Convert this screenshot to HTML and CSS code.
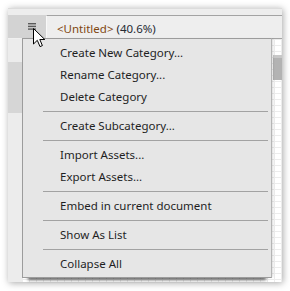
FILE: index.html
```html
<!DOCTYPE html>
<html>
<head>
<meta name="viewport" content="width=device-width, initial-scale=1">
<link rel="stylesheet" href="styles.css">
</head>
<body>

<div class="window">
  <div class="topstrip"></div>

  <div class="header">
    <div class="menuBtn">
      <svg width="8" height="7" viewBox="0 0 8 7">
        <rect x="0" y="0" width="8" height="1.4" fill="#5a5a5a"/>
        <rect x="0" y="2.7" width="8" height="1.4" fill="#5a5a5a"/>
        <rect x="0" y="5.4" width="8" height="1.4" fill="#5a5a5a"/>
      </svg>
    </div>
    <div class="title"><span class="doc">&lt;Untitled&gt;</span> (40.6%)</div>
  </div>

  <div class="panel">
    <div class="scroll"><div class="thumb"></div></div>
    <div class="grid"><div class="tile"></div></div>
  </div>

  <!-- popup menu opened from the header button -->
  <ul class="menu">
    <li>Create New Category...</li>
    <li>Rename Category...</li>
    <li>Delete Category</li>
    <li class="sep"></li>
    <li>Create Subcategory...</li>
    <li class="sep"></li>
    <li>Import Assets...</li>
    <li>Export Assets...</li>
    <li class="sep"></li>
    <li>Embed in current document</li>
    <li class="sep"></li>
    <li>Show As List</li>
    <li class="sep"></li>
    <li>Collapse All</li>
  </ul>

  <svg class="cursor" width="13" height="20" viewBox="0 0 13 20">
    <path d="M0.5 0.5 V16 L4.3 12.3 L7 18.6 L9.4 17.6 L6.8 11.5 H11.8 Z" fill="#fff" stroke="#000" stroke-width="1" stroke-linejoin="miter"/>
  </svg>
</div>

</body>
</html>
```

FILE: styles.css
```css
body {
  margin: 0;
  background: #fff;
  width: 290px;
  height: 291px;
}

* {
  box-sizing: border-box;
  font-family: "Noto Sans", "Liberation Sans", sans-serif;
}

/* The captured window */
.window {
  position: relative;
  margin: 8px 0 0 8px;
  width: 274px;
  height: 274px;
  display: flex;
  flex-direction: column;
  background: #f0f0f0;
  box-shadow: 1px 1px 7px rgba(0, 0, 0, 0.35);
}

.topstrip {
  height: 7px;
  background: #ededed;
  border-top: 1px solid #dcdcdc;
}

/* Header row: menu button + document title */
.header {
  display: flex;
  height: 24px;
}

.menuBtn {
  width: 38px;
  height: 23px;
  background: #d3d3d3;
  padding: 8px 0 0 20px;
  line-height: 0;
}

.title {
  flex: 1;
  background: #eeeeee;
  border-top: 1px solid #a3a3a3;
  border-bottom: 1px solid #a3a3a3;
  border-left: 1px solid #f8f8f8;
  padding: 4px 0 0 10px;
  font-size: 11.5px;
  line-height: 18px;
  color: #262a33;
}

.title .doc {
  color: #80460f;
}

/* Panel under the header */
.panel {
  flex: 1;
  display: flex;
}

.scroll {
  width: 14px;
  background: #ececec;
}

.thumb {
  margin-top: 23px;
  height: 51px;
  background: #d6d6d6;
}

.grid {
  flex: 1;
  display: flex;
  justify-content: flex-end;
  background-color: #fff;
  background-image:
    linear-gradient(#ececec 1px, transparent 1px),
    linear-gradient(90deg, #ececec 1px, transparent 1px);
  background-size: 100% 6px, 7px 100%;
}

.tile {
  margin-top: 16px;
  width: 9px;
  height: 25px;
  background: #b3b3b3;
  border-top: 3px solid #c8c8c8;
}

/* Popup menu */
.menu {
  position: absolute;
  left: 14px;
  top: 30px;
  width: 250px;
  margin: 0;
  padding: 3px 0 2px;
  list-style-type: none;
  background: #e6e6e6;
  border: 1px solid #9c9c9c;
  border-right-color: #b5b5b5;
  box-shadow: 0 8px 3px -6px rgba(0, 0, 0, 0.6), 2px 0 2px -1px rgba(0, 0, 0, 0.15);
}

.menu li {
  height: 22px;
  line-height: 22px;
  padding-left: 37px;
  font-size: 11.5px;
  color: #1f1f1f;
  white-space: nowrap;
}

.menu li.sep {
  height: 1px;
  margin: 3px 3px 3px 20px;
  padding: 0;
  background: #a2a2a2;
}

.cursor {
  position: absolute;
  left: 25px;
  top: 20px;
}
```
